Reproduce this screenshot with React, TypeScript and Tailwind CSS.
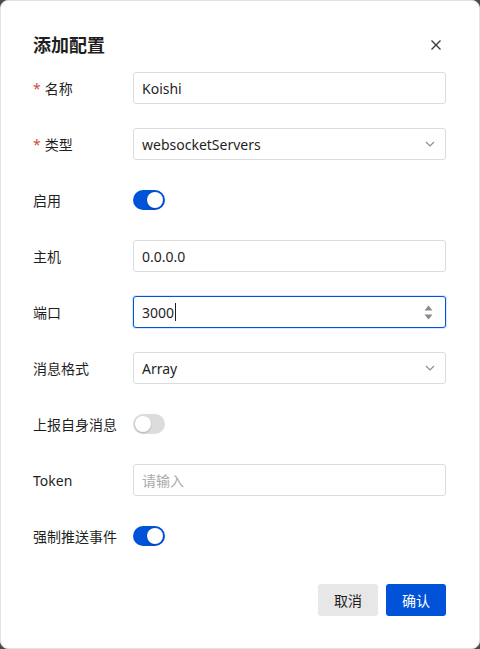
import { useState } from 'react';

const font = { fontFamily: '"Segoe UI", "Noto Sans", "Noto Sans CJK SC", sans-serif' };

function Switch({ on }: { on: boolean }) {
  return (
    <div
      className={`flex h-5 w-8 items-center rounded-full p-[2px] ${on ? 'justify-end bg-[#0052d9]' : 'justify-start bg-[#dcdcdc]'}`}
    >
      <div className="h-4 w-4 rounded-full bg-white shadow-[0_1px_2px_rgba(0,0,0,0.2)]" />
    </div>
  );
}

function Chevron() {
  return (
    <svg width="14" height="14" viewBox="0 0 14 14" fill="none" className="text-[#8b8b8b]">
      <path d="M3 5l4 4 4-4" stroke="currentColor" strokeWidth="1.1" />
    </svg>
  );
}

function Row({ label, required, children }: { label: string; required?: boolean; children: React.ReactNode }) {
  return (
    <div className="flex h-14 items-center">
      <div className="w-[100px] text-[14px] text-[#1f1f1f]">
        {required ? <span className="mr-1 text-[#d54941]">*</span> : null}
        {label}
      </div>
      <div className="flex flex-1 items-center">{children}</div>
    </div>
  );
}

const box = 'flex h-8 w-full items-center rounded-[3px] border bg-white px-2 text-[14px] text-[#1f1f1f]';

export default function App() {
  const [enabled] = useState(true);

  return (
    <div className="h-[649px] w-[480px] bg-[#4b4b4b]" style={font}>
      <div className="flex h-full w-full flex-col rounded-lg border border-[#e3e3e3] bg-white px-8 pt-[26px]">
        <div className="flex h-9 items-center justify-between">
          <h1 className="text-[18px] font-bold text-[#1f1f1f]">添加配置</h1>
          <svg width="16" height="16" viewBox="0 0 16 16" className="mr-[3px] text-[#3a3a3a]">
            <path d="M3.5 3.5l9 9M12.5 3.5l-9 9" stroke="currentColor" strokeWidth="1.4" />
          </svg>
        </div>

        <div className="mt-[-3px] pr-px">
          <Row label="名称" required>
            <div className={`${box} border-[#dcdcdc]`}>Koishi</div>
          </Row>
          <Row label="类型" required>
            <div className={`${box} justify-between border-[#dcdcdc]`}>
              <span>websocketServers</span>
              <Chevron />
            </div>
          </Row>
          <Row label="启用">
            <Switch on={enabled} />
          </Row>
          <Row label="主机">
            <div className={`${box} border-[#dcdcdc]`}>0.0.0.0</div>
          </Row>
          <Row label="端口">
            <div className={`${box} justify-between border-[#0052d9] shadow-[0_0_0_1px_rgba(0,82,217,0.15)]`}>
              <span className="flex items-center">
                3000
                <span className="ml-px h-[18px] w-px bg-[#1f1f1f]" />
              </span>
              <span className="flex flex-col items-center gap-[3px] pr-1">
                <svg width="9" height="6" viewBox="0 0 9 6">
                  <path d="M4.5 0.5 8.5 5.5h-8z" fill="#8a8a8a" />
                </svg>
                <svg width="9" height="6" viewBox="0 0 9 6">
                  <path d="M4.5 5.5 8.5 0.5h-8z" fill="#8a8a8a" />
                </svg>
              </span>
            </div>
          </Row>
          <Row label="消息格式">
            <div className={`${box} justify-between border-[#dcdcdc]`}>
              <span>Array</span>
              <Chevron />
            </div>
          </Row>
          <Row label="上报自身消息">
            <Switch on={false} />
          </Row>
          <Row label="Token">
            <div className={`${box} border-[#dcdcdc] text-[#aaaaaa]`}>请输入</div>
          </Row>
          <Row label="强制推送事件">
            <Switch on={true} />
          </Row>
        </div>

        <div className="mt-5 flex justify-end gap-2 pr-px">
          <button className="h-8 w-[60px] rounded-[3px] bg-[#e7e7e7] text-[14px] text-[#1f1f1f]">取消</button>
          <button className="h-8 w-[60px] rounded-[3px] bg-[#0052d9] text-[14px] text-white">确认</button>
        </div>
      </div>
    </div>
  );
}
